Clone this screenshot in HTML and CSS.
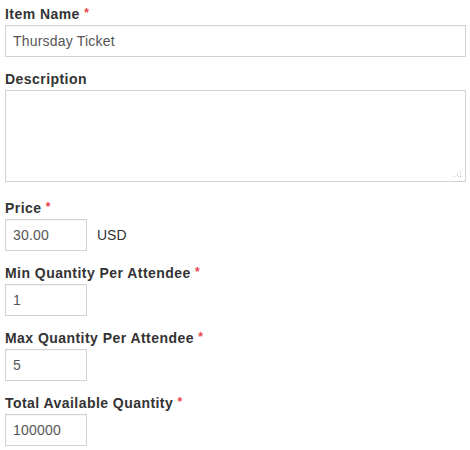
FILE: index.html
```html
<!DOCTYPE html>
<html>
<head>
<meta charset="utf-8">
<link rel="stylesheet" href="styles.css">
</head>
<body>
<form class="form">
  <div class="field">
    <label class="label">Item Name <span class="req">*</span></label>
    <input class="input input-full" type="text" value="Thursday Ticket">
  </div>
  <div class="field field-area">
    <label class="label">Description</label>
    <div class="area-wrap">
      <textarea class="textarea"></textarea>
      <svg class="grip" width="8" height="8" viewBox="0 0 8 8">
        <rect x="6" y="0" width="1" height="1" fill="#c4c4c4"/>
        <rect x="6" y="2" width="1" height="1" fill="#c4c4c4"/>
        <rect x="3" y="3" width="1" height="1" fill="#c4c4c4"/>
        <rect x="6" y="4" width="1" height="1" fill="#c4c4c4"/>
        <rect x="3" y="5" width="1" height="1" fill="#c4c4c4"/>
        <rect x="0" y="6" width="1" height="1" fill="#c4c4c4"/>
        <rect x="6" y="6" width="1" height="1" fill="#c4c4c4"/>
        <rect x="4" y="6" width="1" height="1" fill="#c4c4c4"/>
      </svg>
    </div>
  </div>
  <div class="field">
    <label class="label">Price <span class="req">*</span></label>
    <div class="row">
      <input class="input input-small" type="text" value="30.00">
      <span class="unit">USD</span>
    </div>
  </div>
  <div class="field">
    <label class="label">Min Quantity Per Attendee <span class="req">*</span></label>
    <input class="input input-small" type="text" value="1">
  </div>
  <div class="field">
    <label class="label">Max Quantity Per Attendee <span class="req">*</span></label>
    <input class="input input-small" type="text" value="5">
  </div>
  <div class="field">
    <label class="label">Total Available Quantity <span class="req">*</span></label>
    <input class="input input-small" type="text" value="100000">
  </div>
</form>
</body>
</html>
```

FILE: styles.css
```css
html, body {
  margin: 0;
  padding: 0;
  background: #ffffff;
}
body {
  font-family: "Liberation Sans", Arial, sans-serif;
  font-size: 14px;
  color: #333333;
}
.form {
  padding: 4px 4px 0 5px;
  display: flex;
  flex-direction: column;
}
.field {
  display: flex;
  flex-direction: column;
  margin-bottom: 12px;
}
.field-area {
  margin-bottom: 16px;
}
.label {
  display: block;
  font-weight: bold;
  line-height: 20px;
  height: 20px;
  margin-bottom: 1px;
  color: #333333;
  letter-spacing: 0.45px;
}
.req {
  color: #e8434b;
  font-size: 12px;
  position: relative;
  top: -2px;
}
.input {
  box-sizing: border-box;
  height: 32px;
  border: 1px solid #d2d2d2;
  border-radius: 0;
  padding: 0 7px;
  font-family: "Liberation Sans", Arial, sans-serif;
  font-size: 14px;
  letter-spacing: 0.2px;
  color: #555555;
  background: #ffffff;
  box-shadow: inset 0 1px 1px rgba(0,0,0,0.04);
  outline: none;
  margin: 0;
}
.input-full {
  width: 461px;
}
.input-small {
  width: 82px;
}
.area-wrap {
  position: relative;
  width: 461px;
  height: 92px;
}
.textarea {
  display: block;
  box-sizing: border-box;
  width: 461px;
  height: 92px;
  border: 1px solid #d2d2d2;
  border-radius: 0;
  padding: 6px 7px;
  margin: 0;
  resize: none;
  font-family: "Liberation Sans", Arial, sans-serif;
  font-size: 14px;
  color: #555555;
  outline: none;
}
.grip {
  position: absolute;
  right: 4px;
  bottom: 4px;
}
.row {
  display: flex;
  align-items: center;
  gap: 10px;
}
.unit {
  color: #333333;
  font-size: 14px;
}
```
